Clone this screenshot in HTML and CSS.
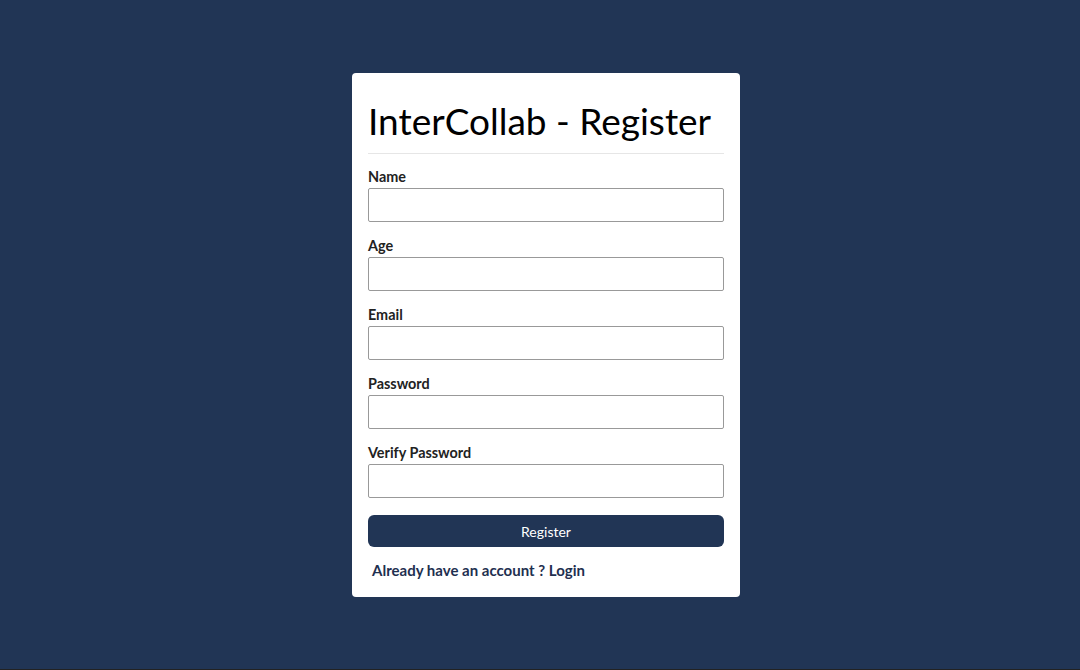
FILE: index.html
```html
<!DOCTYPE html>
<html lang="en">
<head>
<meta charset="utf-8">
<title>InterCollab - Register</title>
<link rel="stylesheet" href="styles.css">
</head>
<body>
<main class="page">
  <form class="card">
    <h1 class="title">InterCollab - Register</h1>
    <hr class="divider">
    <div class="field">
      <label class="label" for="name">Name</label>
      <input class="input" id="name" type="text">
    </div>
    <div class="field">
      <label class="label" for="age">Age</label>
      <input class="input" id="age" type="text">
    </div>
    <div class="field">
      <label class="label" for="email">Email</label>
      <input class="input" id="email" type="email">
    </div>
    <div class="field">
      <label class="label" for="password">Password</label>
      <input class="input" id="password" type="password">
    </div>
    <div class="field">
      <label class="label" for="verify">Verify Password</label>
      <input class="input" id="verify" type="password">
    </div>
    <button class="button" type="button">Register</button>
    <a class="link" href="#">Already have an account ? Login</a>
  </form>
</main>
</body>
</html>
```

FILE: styles.css
```css
* { box-sizing: border-box; }
html { background: #222; }
body {
  margin: 0;
  height: 669px;
  background: #213555;
  font-family: Lato, "Liberation Sans", sans-serif;
}
.page {
  display: flex;
  justify-content: center;
  padding-top: 73px;
}
.card {
  width: 388px;
  background: #fff;
  border-radius: 4px;
  padding: 16px 16px 18px;
  margin-left: 12px;
  display: flex;
  flex-direction: column;
}
.title {
  margin: 0;
  font-weight: 400;
  font-size: 37px;
  line-height: 64px;
  color: #000;
}
.divider {
  margin: 0;
  border: 0;
  border-top: 1px solid #e6e6e6;
}
.field {
  display: flex;
  flex-direction: column;
  margin-top: 15px;
}
.field:first-of-type { margin-top: 14px; }
.label {
  font-size: 14.4px;
  font-weight: 700;
  line-height: 18px;
  color: #222;
  margin-bottom: 2px;
}
.input {
  height: 34px;
  border: 1px solid #999;
  border-radius: 2px;
  margin: 0;
}
.button {
  margin-top: 17px;
  height: 32px;
  border: 0;
  border-radius: 6px;
  background: #213555;
  color: #fff;
  font-family: inherit;
  font-size: 14px;
}
.link {
  margin-top: 14px;
  padding-left: 4px;
  font-size: 15px;
  font-weight: 700;
  line-height: 18px;
  color: #1f3050;
  text-decoration: none;
}
```
